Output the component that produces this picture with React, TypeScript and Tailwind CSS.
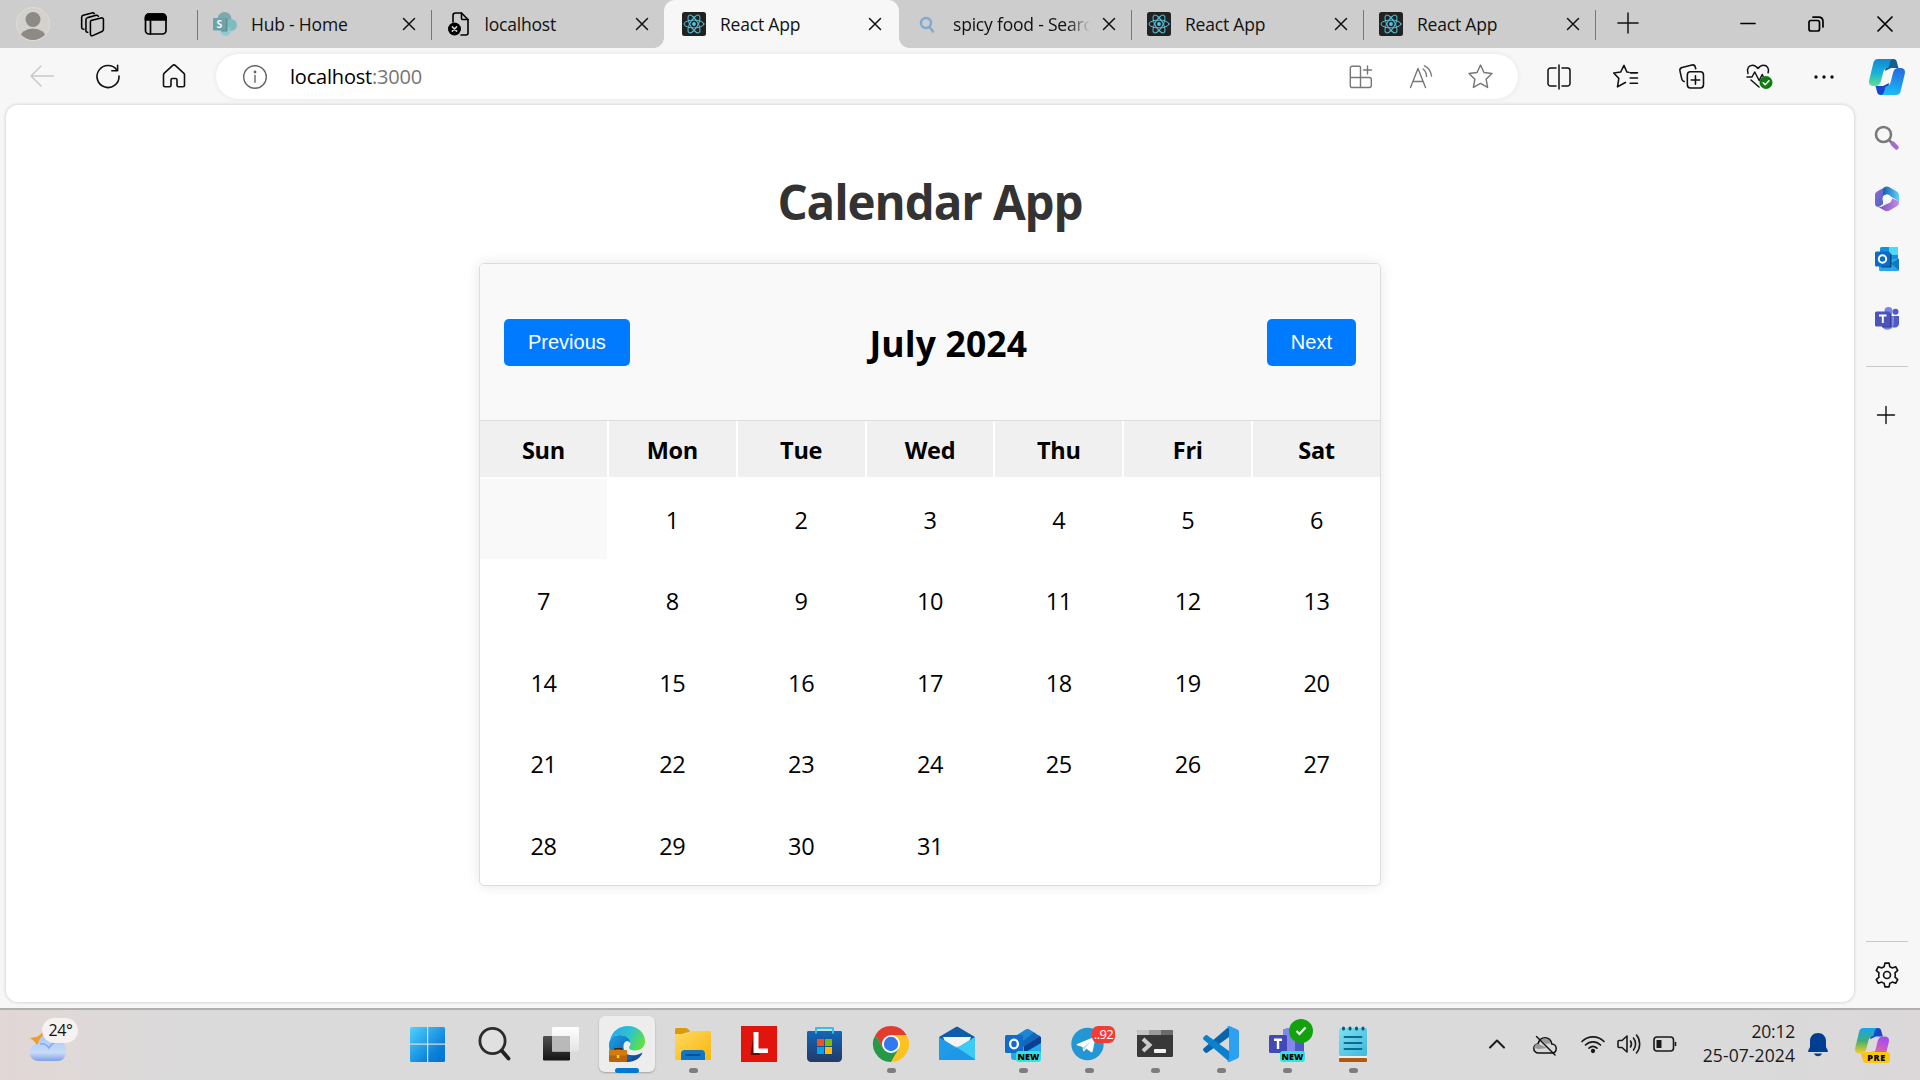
import React from "react";

type Kids = { children?: React.ReactNode };

const Svg = ({
  w = 24,
  h = 24,
  box = "0 0 24 24",
  sw = 1.5,
  c = "#1a1a1a",
  className = "",
  children,
}: Kids & { w?: number; h?: number; box?: string; sw?: number; c?: string; className?: string }) => (
  <svg
    width={w}
    height={h}
    viewBox={box}
    fill="none"
    stroke={c}
    strokeWidth={sw}
    strokeLinecap="round"
    strokeLinejoin="round"
    className={`block shrink-0 overflow-visible ${className}`}
  >
    {children}
  </svg>
);

/* ---------- favicons ---------- */

const ReactFavicon = () => (
  <Svg c="#58c4dc" sw={1}>
    <rect width="24" height="24" rx="2.5" fill="#222" stroke="none" />
    <ellipse cx="12" cy="12" rx="10" ry="3.9" />
    <ellipse cx="12" cy="12" rx="10" ry="3.9" transform="rotate(60 12 12)" />
    <ellipse cx="12" cy="12" rx="10" ry="3.9" transform="rotate(120 12 12)" />
    <circle cx="12" cy="12" r="1.9" fill="#58c4dc" stroke="none" />
  </Svg>
);

const SharePointFavicon = () => (
  <Svg c="none">
    <circle cx="11.5" cy="7" r="7" fill="#7ea9aa" />
    <circle cx="18" cy="13" r="6" fill="#7fbcc0" />
    <circle cx="12.5" cy="19" r="5" fill="#8fccd2" />
    <rect x="8" y="6.500" width="6.500" height="13" rx="1" fill="#5f8f92" />
    <rect x="0" y="6" width="13" height="12.500" rx="1.200" fill="#6ba3a8" />
    <text x="6.400" y="16" textAnchor="middle" fontSize="10.500" fontWeight="700" fill="#f0f5f5" fontFamily="Open Sans, sans-serif">S</text>
  </Svg>
);

const ErrorPageFavicon = () => (
  <Svg c="#000" sw={1.6}>
    <path d="M6 10V3.500C6 2 6.800 1 8.500 1h6L21 7.500V21c0 1.300-.9 2-2 2h-5" />
    <path d="M14.500 1v5.500c0 .7.400 1 1 1H21" />
    <circle cx="7.500" cy="17" r="6.500" fill="#000" stroke="none" />
    <path d="m5.400 14.900 4.200 4.200m0-4.200-4.200 4.200" stroke="#cdcdcd" />
  </Svg>
);

const SearchFavicon = () => (
  <Svg c="#7fa9d3" sw={2.400}>
    <circle cx="11" cy="11" r="5" />
    <path d="m14.500 15 3.500 4.500" />
  </Svg>
);

/* ---------- browser tabs ---------- */

const Close = () => (
  <Svg w={14} h={14} box="0 0 14 14" c="#111" sw={1.5}>
    <path d="m1.500 1.500 11 11m0-11-11 11" />
  </Svg>
);

const Tab = ({
  icon,
  title,
  active,
  sep,
  fade,
}: {
  icon: React.ReactNode;
  title: string;
  active?: boolean;
  sep?: boolean;
  fade?: boolean;
}) => (
  <div
    className={
      active
        ? "relative flex h-12 w-[235px] shrink-0 items-center rounded-t-[11px] bg-[#f7f7f7] pl-[18px] pr-[17px]"
        : "relative flex h-12 min-w-0 flex-1 items-center pl-[16px] pr-[15px]"
    }
  >
    {active && (
      <>
        <div className="absolute -left-[10px] bottom-0 h-[10px] w-[10px] bg-[radial-gradient(circle_at_0_0,#cdcdcd_9.5px,#f7f7f7_10px)]" />
        <div className="absolute -right-[10px] bottom-0 h-[10px] w-[10px] bg-[radial-gradient(circle_at_100%_0,#cdcdcd_9.5px,#f7f7f7_10px)]" />
      </>
    )}
    {sep && <div className="absolute left-0 top-[10px] h-[30px] w-px bg-[#777]" />}
    {icon}
    <div
      className={
        fade
          ? "ml-[14px] w-[137px] overflow-hidden whitespace-nowrap text-[17.5px] tracking-[-0.2px] text-[#111] [mask-image:linear-gradient(90deg,#000_84%,transparent)]"
          : "ml-[14px] whitespace-nowrap text-[17.5px] tracking-[-0.2px] text-[#111]"
      }
    >
      {title}
    </div>
    <div className="ml-auto">
      <Close />
    </div>
  </div>
);

const TabStrip = () => (
  <div className="flex h-12 bg-[#cdcdcd]">
    <div className="flex w-[197px] shrink-0 items-center pl-4">
      <svg width="34" height="34" viewBox="0 0 34 34" className="shrink-0">
        <defs>
          <clipPath id="avatar">
            <circle cx="17" cy="17" r="16" />
          </clipPath>
        </defs>
        <circle cx="17" cy="17" r="16.500" fill="#d3d1ce" stroke="#dedcd8" />
        <g clipPath="url(#avatar)" fill="#8d8985">
          <circle cx="17" cy="12.500" r="7.500" />
          <ellipse cx="17" cy="31" rx="13" ry="9.500" />
        </g>
      </svg>
      <Svg w={25} h={25} className="ml-[30px]" c="#000" sw={1.5}>
        <path d="m10.500 8.200 9.800-2.500c1.200-.3 2.200.4 2.200 1.600v9.200c0 1-.5 1.800-1.400 2.200l-8.900 4c-1.200.5-2.200-.2-2.200-1.500V10c0-1 .1-1.500.5-1.800Z" />
        <path d="M7.500 19.500c-1 .1-1.800-.6-1.800-1.800V7.500c0-1.100.6-1.800 1.600-2.100l8.200-2.200c1.200-.3 1.800.1 2.100 1" />
        <path d="M3.800 16.500c-1.300.1-2.200-.6-2.200-1.800V5.200c0-1 .5-1.800 1.500-2.100L11.500.9c1.100-.3 1.800 0 2.200.7" />
      </Svg>
      <Svg w={24} h={24} className="ml-[39px]" c="#000" sw={1.7}>
        <rect x="1.500" y="2" width="20.500" height="20" rx="3.500" />
        <path d="M1.500 8V5.500A3.500 3.500 0 0 1 5 2h13.500A3.500 3.500 0 0 1 22 5.500V8Z" fill="#000" />
        <path d="M6.500 8v14" />
      </Svg>
    </div>
    <div className="flex w-[1398px] shrink-0">
      <div className="flex w-[467px] shrink-0">
        <Tab sep icon={<SharePointFavicon />} title="Hub - Home" />
        <Tab sep icon={<ErrorPageFavicon />} title="localhost" />
      </div>
      <Tab active icon={<ReactFavicon />} title="React App" />
      <div className="flex flex-1">
        <Tab fade icon={<SearchFavicon />} title="spicy food - Searc" />
        <Tab sep icon={<ReactFavicon />} title="React App" />
        <Tab sep icon={<ReactFavicon />} title="React App" />
      </div>
    </div>
    <div className="flex flex-1 items-center">
      <div className="mt-[2px] h-[30px] w-px bg-[#777]" />
      <Svg w={22} h={22} className="-mt-[2px] ml-[21px]" c="#111" sw={1.6}>
        <path d="M12 1v22M1 12h22" />
      </Svg>
      <Svg w={16} h={16} box="0 0 16 16" className="ml-[101px]" c="#000" sw={1.7}>
        <path d="M1 7.500h14" />
      </Svg>
      <Svg w={16} h={16} box="0 0 16 16" className="ml-[52px]" c="#000" sw={1.7}>
        <rect x="1" y="4.500" width="10.500" height="10.500" rx="2" />
        <path d="M5 1.200h5.500c2.700 0 4.500 1.800 4.500 4.500V11" />
      </Svg>
      <Svg w={16} h={16} box="0 0 16 16" className="ml-[53px]" c="#000" sw={1.7}>
        <path d="m1 1 14 14M15 1 1 15" />
      </Svg>
    </div>
  </div>
);

/* ---------- toolbar ---------- */

const CopilotLogo = ({ size = 36, preview = false }: { size?: number; preview?: boolean }) => {
  const id = preview ? "cpp" : "cpe";
  return (
    <svg width={size} height={size} viewBox="0 0 36 36" className="block shrink-0 overflow-visible">
      <defs>
        <linearGradient id={`${id}a`} x1="0" y1="0" x2="0" y2="1">
          <stop offset="0" stopColor={preview ? "#12a5f3" : "#1387cf"} />
          <stop offset=".5" stopColor={preview ? "#42ad74" : "#14b1dc"} />
          <stop offset="1" stopColor={preview ? "#f9cf22" : "#62df8c"} />
        </linearGradient>
        <linearGradient id={`${id}b`} x1=".3" y1="0" x2="0.100" y2="1">
          <stop offset="0" stopColor={preview ? "#a84cf0" : "#2470e0"} />
          <stop offset="1" stopColor={preview ? "#ff7a6b" : "#19c2fb"} />
        </linearGradient>
      </defs>
      <path d="M18 0h6.500c1.800 0 2.800 1 3.300 2.800L29.500 9H22l-6 3Z" fill={preview ? "#1848c8" : "#15608f"} />
      <path d="M18 36h-6.500c-1.800 0-2.800-1-3.300-2.800L6.500 27H14l6-3Z" fill={preview ? "#f8a63c" : "#1546cf"} />
      <path d="M9 0h15.500c-2 0-3 1.200-3.600 3.200L19.500 8.500c-3 .3-4.500 2-5.200 4.500L12 22c-.8 3.200-2.600 5-5.500 5H4.500C1 27-.6 24.600.2 21.200L4.400 3.800C5 1.300 6.500 0 9 0Z" fill={`url(#${id}a)`} />
      <path d="M27 36H11.500c2 0 3-1.200 3.600-3.200l1.400-5.300c3-.3 4.500-2 5.200-4.500L24 14c.8-3.200 2.600-5 5.500-5h2c3.500 0 5.100 2.400 4.300 5.800l-4.200 17.400C31 34.700 29.500 36 27 36Z" fill={`url(#${id}b)`} />
    </svg>
  );
};

const Toolbar = () => (
  <div className="flex h-[56px] shrink-0 items-center bg-[#f7f7f7]">
    <Svg w={24} h={24} className="ml-[30px]" c="#c9c9c9" sw={1.5}>
      <path d="M23.500 12H1m10-10L1 12l10 10" />
    </Svg>
    <Svg w={24} h={24} className="ml-[42px]" c="#111" sw={1.6}>
      <path d="M21 6.200A11 11 0 1 0 23 12" />
      <path d="M21.600 1.200v5.600h-5.800" />
    </Svg>
    <Svg w={24} h={24} className="ml-[42px]" c="#111" sw={1.6}>
      <path d="M1.500 10.800c0-.7.300-1.200.8-1.700l8.200-7.500c.9-.8 2.100-.8 3 0l8.200 7.500c.5.500.8 1 .8 1.700v10.400c0 .9-.6 1.500-1.500 1.500h-4.500c-.9 0-1.500-.6-1.500-1.500V16c0-1-.6-1.500-1.500-1.500h-3c-.9 0-1.500.5-1.500 1.500v5.200c0 .9-.6 1.500-1.500 1.500H3c-.9 0-1.500-.6-1.500-1.500Z" />
    </Svg>
    <div className="ml-[30px] mt-px flex h-[45px] w-[1302px] items-center rounded-full bg-white shadow-[0_0_4px_1px_rgba(0,0,0,0.06)]">
      <Svg w={24} h={24} className="ml-[27px]" c="#666" sw={1.4}>
        <circle cx="12" cy="12" r="11.300" />
        <path d="M12 10.500v6.800" />
        <circle cx="12" cy="7" r=".7" fill="#666" />
      </Svg>
      <div className="ml-[23px] text-[20px] tracking-[-0.2px] text-black">
        localhost<span className="text-[#767676]">:3000</span>
      </div>
      <Svg w={24} h={24} className="ml-auto" c="#777" sw={1.4}>
        <path d="M11.500 22.500v-20c0-.8-.5-1.200-1.200-1.200H3.200C2 1.300 1.300 2 1.300 3.200v17.200c0 1.300.8 2.100 2 2.100h17c1.200 0 2-.8 2-2v-6c0-1.200-.8-2-2-2h-19M18.500 1v8M14.500 5h8" />
      </Svg>
      <Svg w={24} h={24} className="ml-[36px]" c="#777" sw={1.4}>
        <path d="M1.500 22.500 9 3.500l7.500 19M4 16.500h10M14 4c2 1.300 3.400 4 3.500 7.500M15.500 .8c4 1.800 6.500 5.500 7 10.200" />
      </Svg>
      <Svg w={25} h={25} className="ml-[35px] mr-[25px]" c="#777" sw={1.4}>
        <path d="m12 1 3.300 7.200 7.700 1-5.600 5.400 1.400 7.900L12 18.700l-6.800 3.800 1.400-7.900L1 9.200l7.700-1Z" />
      </Svg>
    </div>
    <Svg w={24} h={24} className="ml-[29px] mt-px" c="#111" sw={1.5}>
      <path d="M12 0v24M9 3H3.500A2.500 2.500 0 0 0 1 5.500v13A2.500 2.500 0 0 0 3.500 21H9M15 3h5.500A2.500 2.500 0 0 1 23 5.500v13a2.500 2.500 0 0 1-2.500 2.500H15" />
    </Svg>
    <Svg w={25} h={25} className="ml-[42px] mt-px" c="#111" sw={1.5}>
      <path d="m15 8-1.700-.3-2.800-6.400-3.100 6.400-6.700 1 4.900 5.100L4.300 22l6.200-3.500 1.500-.8M16.500 8.500h7M16.500 13.500h7M16.500 18.500h7" />
    </Svg>
    <Svg w={25} h={25} className="ml-[41px] mt-px" c="#111" sw={1.5}>
      <rect x="8" y="7.500" width="15.500" height="15.500" rx="3" />
      <path d="M15.800 11.200v8.200M11.700 15.300h8.200" />
      <path d="M5 16.800C3.700 16.500 3 15.700 2.700 14.500L.9 6.600C.6 5 1.400 3.700 3 3.300l9.400-2.400c1.500-.3 2.900.5 3.200 2l.5 1.600" />
    </Svg>
    <Svg w={27} h={25} box="0 0 27 25" className="ml-[42px] mt-px" c="#111" sw={1.5}>
      <path d="M2 9.500C.3 4.300 3 1.200 6.500 1.200c2.600 0 4.200 1.500 5.500 3.300 1.300-1.800 3-3.300 5.500-3.300 3.500 0 6 3.100 4.600 7.500M1 13h5l2.700-5 4.500 8.500 3-6 1.300 2.500M5 16l8 7" />
      <circle cx="20" cy="18.500" r="6.500" fill="#107c10" stroke="none" />
      <path d="m17.200 18.700 2 2 3.800-4" stroke="#fff" />
    </Svg>
    <Svg w={20} h={6} box="0 0 20 6" className="ml-[41px] mt-px" c="none">
      <g fill="#111">
        <circle cx="2" cy="3" r="1.700" />
        <circle cx="10" cy="3" r="1.700" />
        <circle cx="18" cy="3" r="1.700" />
      </g>
    </Svg>
    <div className="ml-[35px] mt-[2px]">
      <CopilotLogo />
    </div>
  </div>
);

/* ---------- calendar page ---------- */

const days = ["Sun", "Mon", "Tue", "Wed", "Thu", "Fri", "Sat"];
const dates = Array.from({ length: 31 }, (_, i) => i + 1);

const Btn = ({ children }: Kids) => (
  <button className="h-[47px] rounded-[5px] bg-[#007bff] px-6 pb-px font-['Liberation_Sans',sans-serif] text-[20px] leading-[46px] text-white">
    {children}
  </button>
);

const CalendarPage = () => (
  <main className="ml-[6px] mt-px flex h-[897px] w-[1848px] flex-col items-center rounded-[12px] bg-white shadow-[0_0_3px_1px_rgba(0,0,0,0.12)]">
    <h1 className="mt-[64px] h-[65px] text-[47.5px] font-bold leading-[65px] tracking-[-1.1px] text-[#333]">Calendar App</h1>
    <section className="mt-[29px] w-[902px] overflow-hidden rounded-[5px] border border-[#ddd] bg-white shadow-[0_0_13px_rgba(0,0,0,0.1)]">
      <header className="flex h-[157px] items-center justify-between border-b border-[#ddd] bg-[#f9f9f9] px-6">
        <Btn>Previous</Btn>
        <h2 className="pt-[4px] text-[35.5px] font-bold tracking-[0.15px] text-black">July 2024</h2>
        <Btn>Next</Btn>
      </header>
      <div className="grid grid-cols-7 gap-[2px] text-center">
        {days.map((d) => (
          <div key={d} className="flex h-[56px] items-center justify-center bg-[#f0f0f0] pt-[3px] text-[23.5px] font-bold tracking-[-0.3px]">
            {d}
          </div>
        ))}
        <div className="bg-[#f9f9f9]" />
        {dates.map((d) => (
          <div key={d} className="flex h-[79.5px] items-center justify-center pt-[3px] text-[23.5px] tracking-[-0.4px]">
            {d}
          </div>
        ))}
      </div>
    </section>
  </main>
);

/* ---------- browser sidebar ---------- */

const Sidebar = () => (
  <aside className="flex w-[66px] shrink-0 flex-col items-center">
    <Svg w={24} h={24} className="mt-[22px]" sw={2.600} c="#7a7a7a">
      <circle cx="8.500" cy="8.500" r="7.500" />
      <path d="m14 14 2.500 2.500" />
      <path d="m17.700 17.700 3.800 3.800" stroke="#a56cd0" strokeWidth="4.500" />
    </Svg>
    <svg width="26" height="26" viewBox="0 0 26 26" className="mt-[36px]">
      <defs>
        <linearGradient id="m3a" x1="0" y1="0" x2="1" y2="1">
          <stop offset="0" stopColor="#a06ad6" />
          <stop offset="1" stopColor="#2f66c4" />
        </linearGradient>
        <linearGradient id="m3b" x1="0" y1="0" x2="1" y2="0">
          <stop offset="0" stopColor="#155fa8" />
          <stop offset="1" stopColor="#5cd3ff" />
        </linearGradient>
        <linearGradient id="m3c" x1="0" y1="0" x2="1" y2="0">
          <stop offset="0" stopColor="#7b4fb4" />
          <stop offset="1" stopColor="#c38be8" />
        </linearGradient>
      </defs>
      <path d="M12 .5 3 5.400C1.700 6.200 1 7.200 1 8.700v9c0 2.500 2.500 3.800 4.500 2.700L9 18V8.500c0-1.500.5-2.500 1.500-3.500Z" fill="url(#m3a)" />
      <path d="M10.500 1.300c1.600-1 3.400-1 5 0l7.700 4.400c1.200.8 1.800 1.800 1.800 3.200v8c-.5-1.700-1.500-2.600-3-3.500L13 8.500 9 10V5c0-1.500.3-2.800 1.500-3.700Z" fill="url(#m3b)" />
      <path d="M25 16.500c0 1.600-.6 2.700-1.800 3.400l-7.700 4.600c-1.600 1-3.400 1-5 0L4 20.700c2 .5 3.500.2 5-.7l8-4.500 1-3 4 1.500c1.600 1 3 1.500 3 2.500Z" fill="url(#m3c)" />
      <circle cx="13" cy="13" r="4.500" fill="#f7f7f7" />
    </svg>
    <svg width="24" height="24" viewBox="0 0 24 24" className="mt-[35px]">
      <rect x="5" y="0" width="18" height="16" rx="1.500" fill="#1490df" />
      <path d="M14 0h7.500c.8 0 1.500.7 1.500 1.500V8h-9Z" fill="#50d9ff" />
      <path d="M4 12h20v10.500c0 .8-.7 1.500-1.500 1.500h-17C4.700 24 4 23.300 4 22.500Z" fill="#28a8ea" />
      <path d="m24 11.500-8 5 8 7Z" fill="#0f78c8" />
      <rect x="6" y="6.500" width="10.500" height="14" rx="1" fill="#0a4a80" />
      <rect x="0" y="4.500" width="15" height="15" rx="1.500" fill="#0a6cc8" />
      <circle cx="7.500" cy="12" r="3.700" fill="none" stroke="#fff" strokeWidth="2" />
    </svg>
    <svg width="24" height="24" viewBox="0 0 24 24" className="mt-[36px]">
      <circle cx="13.500" cy="4" r="4" fill="#7b83eb" />
      <circle cx="20.500" cy="4.800" r="3" fill="#5059c9" />
      <path d="M16 9h8v7.500c0 2.200-1.600 4-4 4h-2Z" fill="#5059c9" />
      <path d="M7 9h12v8a6.500 6.500 0 0 1-12 2.500Z" fill="#7b83eb" />
      <rect x="7" y="6" width="9.500" height="14.500" rx="1" fill="#3a3f90" />
      <rect y="4.500" width="15" height="15" rx="1.500" fill="#4b53bc" />
      <path d="M4 8.500h7.500M7.800 8.500V16" stroke="#fff" strokeWidth="1.900" />
    </svg>
    <div className="mt-[35px] h-px w-[42px] bg-[#c8c8c8]" />
    <Svg w={18} h={18} box="0 0 18 18" className="mt-[39px] -ml-[2px]" c="#111" sw={1.4}>
      <path d="M9 .5v17M.5 9h17" />
    </Svg>
    <div className="mt-auto h-px w-[42px] bg-[#c8c8c8]" />
    <Svg w={26} h={26} className="mb-[20px] mt-[20px]" c="#111" sw={1.5}>
      <path d="M10.100 1h3.800l.7 3.300c.8.300 1.500.7 2.200 1.200l3.200-1.100 1.900 3.300-2.500 2.300a8 8 0 0 1 0 4l2.500 2.300-1.900 3.300-3.200-1.100c-.7.500-1.400.9-2.200 1.200l-.7 3.300h-3.800l-.7-3.300c-.8-.3-1.500-.7-2.200-1.200L4 19.600l-1.900-3.300L4.600 14a8 8 0 0 1 0-4L2.100 7.700 4 4.400l3.200 1.100c.7-.5 1.400-.9 2.200-1.200Z" />
      <circle cx="12" cy="12" r="3.200" />
    </Svg>
  </aside>
);

/* ---------- taskbar ---------- */

const Slot = ({ children, dot }: Kids & { dot?: boolean }) => (
  <div className="relative flex h-[68px] w-[66px] shrink-0 items-center justify-center">
    {children}
    {dot && <div className="absolute bottom-[5px] left-[29px] h-[5px] w-[9px] rounded-full bg-[#7d7d7d]" />}
  </div>
);

const Ic = ({ children }: Kids) => (
  <svg width="36" height="36" viewBox="0 0 36 36" className="block overflow-visible">
    {children}
  </svg>
);

const NewBadge = () => (
  <div className="absolute left-[26px] top-[41px] flex h-[11px] w-[25px] items-center justify-center rounded-[3px] bg-[#2ee6e0] font-['Open_Sans',sans-serif] text-[9px] font-extrabold leading-none text-black">
    NEW
  </div>
);

const Taskbar = () => (
  <footer className="flex h-[72px] shrink-0 border-t-2 border-[#b0b0b0] bg-[linear-gradient(90deg,#e2d6d6_0px,#dfd9d8_70px,#dadada_190px,#dadada_1750px,#dcd8da_1920px)]">
    <div className="relative w-[396px] shrink-0">
      <svg width="52" height="44" viewBox="0 0 52 44" className="ml-[28px] mt-[9px]">
        <defs>
          <linearGradient id="cloud" x1="0" y1="0" x2="0" y2="1">
            <stop offset="0" stopColor="#a8c8f5" />
            <stop offset=".7" stopColor="#c7daf8" />
            <stop offset="1" stopColor="#7fa0e8" />
          </linearGradient>
        </defs>
        <path d="M16 9v16L8 27c1-3-2-5-6-8l6-1c4-1 7-5 8-9Z" fill="#f39a26" />
        <path d="M10 42a8 8 0 0 1 0-17c1-6 5-10 11-10 5 0 9 3 10 7 5 1 7 5 7 10 0 6-3 10-8 10Z" fill="url(#cloud)" />
        <path d="M12 25c4-1 7 1 9 4 2-4 5-6 9-6" fill="none" stroke="#86aaf0" strokeWidth="1.500" />
      </svg>
      <div className="absolute left-[42px] top-[8px] flex h-[25px] w-[36px] items-center justify-center rounded-full bg-[#f5f2f1] pb-[2px] pl-[1px] text-[16px] tracking-[-0.3px] text-[#111]">
        24°
      </div>
    </div>
    <div className="flex w-[990px] shrink-0">
      <Slot>
        <Ic>
          <defs>
            <linearGradient id="win" gradientUnits="userSpaceOnUse" x1="0" y1="0" x2="36" y2="36">
              <stop offset="0" stopColor="#4fd2ff" />
              <stop offset=".7" stopColor="#0a80d8" />
              <stop offset="1" stopColor="#0070d0" />
            </linearGradient>
          </defs>
          <path d="M.500 1H16v16.500H-1v-15A1.500 1.500 0 0 1 .500 1ZM17.200 1h15.300A1.500 1.500 0 0 1 34 2.500v15H17.200ZM-1 18.700h17V36H.500A1.500 1.500 0 0 1-1 34.500ZM17.200 18.700H34v15.800a1.500 1.500 0 0 1-1.500 1.500H17.200Z" fill="url(#win)" />
        </Ic>
      </Slot>
      <Slot>
        <Ic>
          <circle cx="15.500" cy="15" r="12.600" fill="#e0e0e0" stroke="#2c2c2c" strokeWidth="2.800" />
          <path d="m25 25 6.500 7.500" stroke="#222" strokeWidth="3.800" strokeLinecap="round" />
        </Ic>
      </Slot>
      <Slot>
        <Ic>
          <defs>
            <linearGradient id="tv" x1="0" y1="0" x2="0" y2="1">
              <stop offset="0" stopColor="#505050" />
              <stop offset="1" stopColor="#151515" />
            </linearGradient>
            <linearGradient id="tvl" x1="0" y1="0" x2="0" y2="1">
              <stop offset="0" stopColor="#fff" />
              <stop offset="1" stopColor="#e4e4e4" />
            </linearGradient>
          </defs>
          <rect x="0" y="10" width="27" height="24.500" rx="1.200" fill="url(#tv)" />
          <rect x="9" y="1" width="27" height="24.500" rx="1.200" fill="url(#tvl)" />
          <rect x="9" y="10" width="18" height="15.500" fill="#b9b9b9" />
        </Ic>
      </Slot>
      <Slot>
        <div className="flex h-[56px] w-[56px] items-center justify-center rounded-[6px] bg-[#ededed] shadow-[0_1px_2px_rgba(0,0,0,0.25)]">
          <Ic>
            <defs>
              <linearGradient id="eg1" x1="0" y1=".2" x2="1" y2=".6">
                <stop offset="0" stopColor="#28a6e8" />
                <stop offset=".5" stopColor="#2cc3d2" />
                <stop offset="1" stopColor="#62e03f" />
              </linearGradient>
              <linearGradient id="eg2" x1="0" y1="0" x2="1" y2="1">
                <stop offset="0" stopColor="#1ba0e4" />
                <stop offset="1" stopColor="#0c58b0" />
              </linearGradient>
            </defs>
            <path d="M14 25c3 5 12 6 19.500 1.500-2 6-8.500 9.500-14.500 9.500-6 0-10-2-13-6Z" fill="#124f94" />
            <path d="M1 14C3.500 5 10 0 19 0c10 0 17 7 17 15 0 6-4 9.500-10 9.500-3.500 0-6-1-6-3 0-1 1.500-2 1.500-4 0-5-5.500-8.500-11.500-8.500-4 0-7 2-9 5Z" fill="url(#eg1)" />
            <path d="M0 19C0 13 4 9 10.500 9c6 0 11 3.500 11 8.500-3-5-7.500-1.500-7 4 .5 5 4.500 8.500 9.500 10-3 3-8 3.500-13 2.500C4 33 0 27 0 19Z" fill="url(#eg2)" />
            <rect x="0" y="24" width="18" height="12" rx="1.200" fill="#b9640a" />
            <rect x="0" y="24" width="18" height="5.500" rx="1.200" fill="#d27a10" />
            <path d="M6 24v-1.300h6.500V24" fill="none" stroke="#4a2500" strokeWidth="1.300" />
            <rect x="7.800" y="29" width="2.500" height="3" fill="#ffd21f" />
          </Ic>
        </div>
        <div className="absolute bottom-[5px] left-[21px] h-[5px] w-[24px] rounded-full bg-[#0078d4]" />
      </Slot>
      <Slot dot>
        <Ic>
          <defs>
            <linearGradient id="fold" x1="0" y1="0" x2="1" y2="1">
              <stop offset="0" stopColor="#ffd862" />
              <stop offset="1" stopColor="#f8b70c" />
            </linearGradient>
          </defs>
          <path d="M0 10V3.500c0-.8.700-1.500 1.500-1.500h9c1 0 1.800.3 2.500 1l2.500 2.500Z" fill="#dc9a08" />
          <path d="M0 8h12l3.500-3H34.500c.8 0 1.500.7 1.500 1.500V34H0Z" fill="url(#fold)" />
          <path d="M6 34V27.500C6 25.500 7.300 24 9.500 24h17c2.200 0 3.500 1.500 3.500 3.500V34Z" fill="#1075c5" />
          <path d="M11.500 29h13" stroke="#0a508f" strokeWidth="1.800" strokeLinecap="round" />
        </Ic>
      </Slot>
      <Slot>
        <Ic>
          <rect width="36" height="36" fill="#e2150c" />
          <path d="m12.500 8-3 21h10l-4-5Z" fill="#6a0904" />
          <path d="M12.500 6h5v16.500H27V27H12.500Z" fill="#fff" />
        </Ic>
      </Slot>
      <Slot>
        <Ic>
          <defs>
            <linearGradient id="st" x1="0" y1="0" x2="0" y2="1">
              <stop offset="0" stopColor="#1167b8" />
              <stop offset="1" stopColor="#243a66" />
            </linearGradient>
          </defs>
          <path d="M0 6.500C0 5.700.500 5 1.500 5h32c1 0 1.500.7 1.500 1.500V32c0 2.200-1.600 4-4 4H4c-2.400 0-4-1.800-4-4Z" fill="url(#st)" />
          <path d="M9 7.500V2h17v5.500" fill="none" stroke="#35bff0" strokeWidth="2" strokeLinejoin="round" />
          <rect x="10" y="13" width="7" height="7" fill="#f25022" />
          <rect x="18" y="13" width="7" height="7" fill="#7fba00" />
          <rect x="10" y="21" width="7" height="7" fill="#00a4ef" />
          <rect x="18" y="21" width="7" height="7" fill="#ffb900" />
        </Ic>
      </Slot>
      <Slot dot>
        <Ic>
          <path d="M2.410 9A18 18 0 0 1 33.590 9H18L10.210 22.500Z" fill="#e33b2e" />
          <path d="M33.590 9A18 18 0 0 1 18 36L25.790 22.500 18 9Z" fill="#fcc31e" />
          <path d="M18 36A18 18 0 0 1 2.410 9L10.210 22.500 18 27l7.790-4.500Z" fill="#279847" />
          <circle cx="18" cy="18" r="9" fill="#fff" />
          <circle cx="18" cy="18" r="7.200" fill="#3079ee" />
        </Ic>
      </Slot>
      <Slot>
        <Ic>
          <path d="M0 11 16.500 1.300c1-.6 2-.6 3 0L36 11l-2 8H2Z" fill="#0f5ca8" />
          <path d="M4 11h28l-4 9H8Z" fill="#f4f4f4" />
          <path d="M36 11v22c0 .6-.4 1-1 1H1c-.6 0-1-.4-1-1V11l18 11Z" fill="#1f9be8" />
          <path d="M36 11v22.500L16 21l3 .500Z" fill="#3ccaf6" />
          <path d="M36 33.500V34H1L18 21.500Z" fill="#1e97e4" />
        </Ic>
      </Slot>
      <Slot dot>
        <Ic>
          <path d="M6 13 21 3.500c1-.6 2-.6 3 0L36 11v20a3 3 0 0 1-3 3H9a3 3 0 0 1-3-3Z" fill="#28a8ea" />
          <path d="M12 9 21 3.500c1-.6 2-.6 3 0L30 7 17 16Z" fill="#1a86d4" />
          <path d="m34 9.500 2 1.800V17l-17 10v-7Z" fill="#0b3f94" />
          <path d="m29 6.500 6 4L18 21v-6Z" fill="#1566b8" />
          <rect x="0" y="9" width="18" height="18" rx="1.500" fill="#0f6cc8" />
          <ellipse cx="9" cy="18" rx="3.900" ry="4.400" fill="none" stroke="#fff" strokeWidth="2.300" />
        </Ic>
        <NewBadge />
      </Slot>
      <Slot dot>
        <Ic>
          <circle cx="16.500" cy="18" r="16.200" fill="#2496d4" />
          <path d="m5 18.500 18-7.500c1-.4 1.600.1 1.400 1.200l-2.700 13c-.2 1.200-1 1.400-1.900.8l-4.300-3.200-2.200 2.200c-.6.600-1.100.5-1.200-.5l-.6-3.600-4.700-1.500c-1-.3-1-.8-1.800-.9Z" fill="#fff" />
          <path d="m11.900 21.500 8.500-6.800-6.200 7.300-.9 2.900Z" fill="#b8d8ee" />
        </Ic>
        <div className="absolute left-[36px] top-[16px] flex h-[17px] w-[23px] items-center justify-center rounded-[6px] bg-[#f23c34] text-[13px] leading-none tracking-[-0.6px] text-white">
          ..92
        </div>
      </Slot>
      <Slot dot>
        <Ic>
          <rect y="4" width="36" height="27" rx="1.500" fill="#383838" />
          <path d="M0 9V5.500C0 4.700.700 4 1.500 4H12v5Z" fill="#c4c4c4" />
          <path d="M12 4h12v5H12Z" fill="#9a9a9a" />
          <path d="M24 4h10.500c.8 0 1.500.7 1.500 1.500V9H24Z" fill="#6a6a6a" />
          <path d="m6 13 6.500 6L6 25" fill="none" stroke="#ccc" strokeWidth="4" />
          <rect x="17" y="23" width="12" height="4" rx=".8" fill="#f2f2f2" />
        </Ic>
      </Slot>
      <Slot dot>
        <Ic>
          <path d="M26 .500V11L4.500 26.500c-.8.600-1.600.5-2.300-.1L.700 25c-.9-.8-.9-1.900 0-2.700Z" fill="#0a64ac" />
          <path d="M26 35.500V25L4.500 9.500c-.8-.6-1.600-.5-2.300.1L.700 11c-.9.800-.9 1.900 0 2.700Z" fill="#0b80cc" />
          <path d="M26.500.100 34.500 3.600c1 .5 1.500 1.200 1.500 2.300v24.200c0 1.100-.5 1.800-1.500 2.300l-8 3.500c-.8.300-1.600.1-2.300-.6l1.800-2.300V3L24.200.700c.7-.7 1.500-.9 2.300-.6Z" fill="#2ea0f0" />
        </Ic>
      </Slot>
      <Slot dot>
        <Ic>
          <circle cx="19" cy="7" r="5" fill="#7b83eb" />
          <path d="M14 3h14v26c-3 5-11 5-14 0Z" fill="#8188ea" />
          <path d="M26 13h9v15a5 5 0 0 1-5 5h-4Z" fill="#5059c9" />
          <rect x="0" y="9" width="18" height="18" rx="1.500" fill="#4149b5" />
          <path d="M5 13.800h8M9 13.800V23" stroke="#fff" strokeWidth="2.400" />
        </Ic>
        <NewBadge />
        <svg width="24" height="24" viewBox="0 0 24 24" className="absolute left-[35px] top-[9px]">
          <circle cx="12" cy="12" r="12" fill="#13a10e" />
          <path d="m7.500 12 3 3 6-6.500" fill="none" stroke="#fff" strokeWidth="2.200" />
        </svg>
      </Slot>
      <Slot dot>
        <Ic>
          <defs>
            <linearGradient id="np" x1="0" y1="0" x2="1" y2="1">
              <stop offset="0" stopColor="#7fe0f0" />
              <stop offset="1" stopColor="#3fb8dc" />
            </linearGradient>
          </defs>
          <rect x="4" y="30" width="28" height="2.500" fill="#eee" />
          <rect x="4" y="32" width="28" height="4" rx="1" fill="#b0580c" />
          <rect x="4" y="2" width="28" height="28" rx="1.500" fill="url(#np)" />
          <path d="M9.500 11h17M9.500 17h17M9.500 23h17" stroke="#0b6c92" strokeWidth="1.900" strokeLinecap="round" />
          <path d="M8.500 2v1M15 2v1M21.500 2v1M28 2v1" stroke="#0b5a7c" strokeWidth="3" strokeLinecap="round" />
        </Ic>
      </Slot>
    </div>
    <div className="flex flex-1 items-center pl-[103px]">
      <Svg w={16} h={10} box="0 0 16 10" className="-mt-[2px]" c="#1a1a1a" sw={2}>
        <path d="m1 8.500 7-7 7 7" />
      </Svg>
      <Svg w={24} h={20} box="0 0 24 20" className="ml-[28px] mt-[1px]" c="#111" sw={1.500}>
        <path d="M5.500 17C2.800 17 .800 15 .800 12.500S2.700 8 5 8C6 4 8.700 1.800 12 1.800S18 4 18.800 8c2.500 0 4.400 2 4.400 4.500S21.500 17 18.800 17Z" fill="#d8d8d8" />
        <path d="M2 9c2-1.500 4-1 6 0l6 3-8 1-5-1ZM8 4c3-2.500 8-2 10 3l-5 1Z" fill="#999" stroke="none" />
        <path d="m3.500 .5 18.500 18.500" />
      </Svg>
      <Svg w={24} h={18} box="0 0 24 18" className="ml-[24px] -mt-[3px]" c="#1a1a1a" sw={1.700}>
        <path d="M1 6.500c6.200-6.200 15.800-6.200 22 0M4.500 10c4.300-4.200 10.700-4.200 15 0M8 13.200c2.400-2.200 5.600-2.200 8 0" />
        <circle cx="12" cy="16" r="1.300" fill="#1a1a1a" />
      </Svg>
      <Svg w={24} h={20} box="0 0 24 20" className="ml-[12px] -mt-[2px]" c="#1a1a1a" sw={1.600}>
        <path d="M1 7.500v5c0 .6.400 1 1 1h3l5 4.500V2L5 6.500H2c-.6 0-1 .4-1 1ZM13.500 7c1.300 2 1.300 4 0 6M16.500 4c2.700 3.500 2.700 8.500 0 12M19.500 1c4.200 5 4.200 13 0 18" />
      </Svg>
      <Svg w={24} h={16} box="0 0 24 16" className="ml-[12px] -mt-[2px]" c="#1a1a1a" sw={1.600}>
        <rect x="1" y="1" width="19.500" height="14" rx="3" />
        <rect x="3.500" y="4" width="5" height="8" rx=".5" fill="#1a1a1a" stroke="none" />
        <path d="M22.500 6.500v3" />
      </Svg>
      <div className="-mt-[4px] ml-[10px] w-[108px] whitespace-nowrap text-right text-[17.5px] leading-[24px] text-[#1a1a1a]">
        <div className="tracking-[-0.2px]">20:12</div>
        <div className="tracking-[0.1px]">25-07-2024</div>
      </div>
      <svg width="20" height="24" viewBox="0 0 20 24" className="ml-[13px]">
        <path d="M10 0c-4.600 0-8 3.500-8 8v6l-1.800 3.500c-.3.700 0 1.500.8 1.500h18c.8 0 1.100-.8.800-1.500L18 14V8c0-4.500-3.400-8-8-8ZM6 20.500c.7 1.700 2.200 2.700 4 2.700s3.300-1 4-2.700Z" fill="#003e92" />
      </svg>
      <div className="relative ml-[27px]">
        <CopilotLogo size={34} preview />
        <div className="absolute left-[8px] top-[24px] flex h-[11px] w-[27px] items-center justify-center rounded-[3px] bg-[#fdc70c] text-[9px] font-extrabold leading-none tracking-[0.6px] text-black">
          PRE
        </div>
      </div>
    </div>
  </footer>
);

export default function App() {
  return (
    <div className="flex h-[1080px] w-[1920px] flex-col overflow-hidden bg-[#f7f7f7] font-['Open_Sans','Noto_Sans',sans-serif]">
      <TabStrip />
      <Toolbar />
      <div className="flex h-[904px] shrink-0">
        <CalendarPage />
        <Sidebar />
      </div>
      <Taskbar />
    </div>
  );
}
